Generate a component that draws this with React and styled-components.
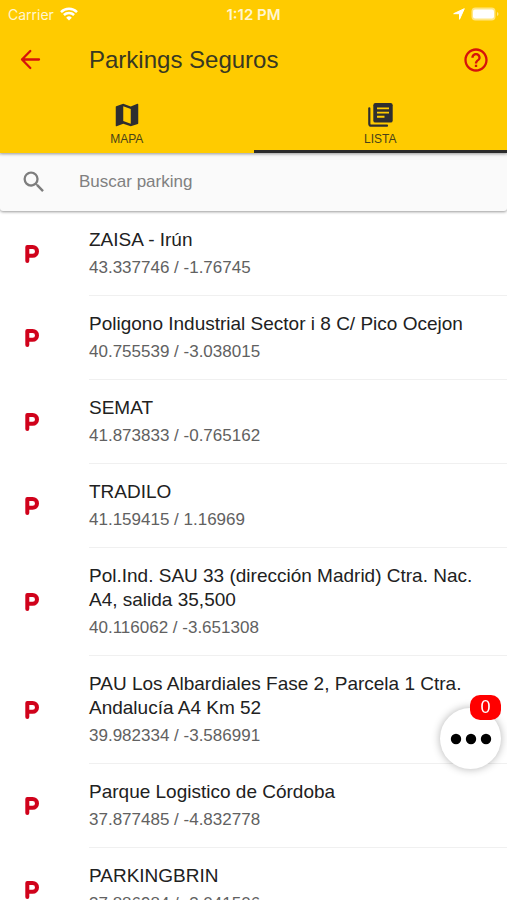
import React from "react";
import styled, { createGlobalStyle } from "styled-components";
import { MdHelpOutline, MdMap, MdSearch } from "react-icons/md";

const Global = createGlobalStyle`
  * { box-sizing: border-box; }
  html, body, #root { height: 100%; }
  body {
    margin: 0;
    background: #fff;
    color: #212121;
    font-family: "Liberation Sans", Arial, Helvetica, sans-serif;
  }
  button, input { font: inherit; }
`;

const Screen = styled.div`
  height: 100%;
  display: flex;
  flex-direction: column;
  overflow: hidden;
`;

const Header = styled.header`
  flex: none;
  position: relative;
  z-index: 1;
  background: #ffcb00;
  box-shadow: 0 1px 3px rgba(0, 0, 0, 0.4);
`;

const StatusBar = styled.div`
  display: grid;
  grid-template-columns: 1fr auto 1fr;
  align-items: center;
  height: 28px;
  padding: 0 8px;
  color: #fff6d0;
  font-family: Inter, "Liberation Sans", sans-serif;
  font-size: 14px;
`;

const StatusGroup = styled.div`
  display: flex;
  align-items: center;
  gap: 6px;
  justify-content: ${(p) => (p.$end ? "flex-end" : "flex-start")};
`;

const Clock = styled.time`
  font-size: 15px;
  font-weight: 600;
`;

const Toolbar = styled.div`
  display: flex;
  align-items: center;
  height: 64px;
  padding: 0 17px;
`;

const IconButton = styled.button`
  display: flex;
  padding: 0;
  border: 0;
  background: none;
  color: #d6130b;
  font-size: 28px;
`;

const Title = styled.h1`
  flex: 1;
  margin: 0;
  padding-left: 44px;
  color: #383822;
  font-size: 24px;
  font-weight: 400;
  line-height: 28px;
`;

const Tabs = styled.div`
  display: flex;
`;

const Tab = styled.button`
  flex: 1;
  display: flex;
  flex-direction: column;
  align-items: center;
  gap: 2px;
  height: 61px;
  padding: 8px 0 0;
  border: 0;
  border-bottom: 3px solid ${(p) => (p["aria-selected"] ? "#2b2b2b" : "transparent")};
  background: none;
  color: #4a4318;
  font-size: 12px;
  line-height: 14px;

  svg {
    color: #2e2e30;
    font-size: 30px;
  }
`;

const SearchBar = styled.label`
  flex: none;
  display: flex;
  align-items: center;
  height: 58px;
  padding: 0 20px;
  gap: 31px;
  border-radius: 3px;
  background: #fafafa;
  box-shadow: 0 1px 3px rgba(0, 0, 0, 0.4);
  color: #7d7d7d;
  font-size: 28px;
`;

const SearchInput = styled.input`
  flex: 1;
  min-width: 0;
  padding: 0;
  border: 0;
  outline: 0;
  background: none;
  color: #212121;
  font-size: 17px;

  &::placeholder {
    color: #808080;
    opacity: 1;
  }
`;

const List = styled.ul`
  flex: 1;
  min-height: 0;
  margin: 0;
  padding: 1px 0 0;
  overflow: hidden;
  list-style: none;
`;

const Row = styled.li`
  display: flex;
  align-items: center;
  padding-left: 25px;
  gap: 50px;
`;

const MarkIcon = styled.svg`
  flex: none;
  color: #d0021b;
`;

const RowBody = styled.div`
  flex: 1;
  min-width: 0;
  padding: 16px 20px 16px 0;
  border-bottom: 1px solid #f0f0f0;
`;

const Name = styled.h2`
  margin: 0;
  font-size: 19px;
  font-weight: 400;
  line-height: 24px;
`;

const Coordinates = styled.p`
  margin: 4px 0 0;
  color: #616161;
  font-size: 17px;
  line-height: 23px;
`;

const MoreButton = styled.button`
  position: fixed;
  right: 6px;
  bottom: 131px;
  z-index: 2;
  display: flex;
  align-items: center;
  justify-content: center;
  width: 61px;
  height: 61px;
  padding: 0;
  border: 0;
  border-radius: 50%;
  background: #fff;
  box-shadow: 0 0 8px rgba(0, 0, 0, 0.3);
`;

const Badge = styled.span`
  position: absolute;
  top: -13px;
  right: 0;
  width: 31px;
  border-radius: 10px;
  background: #ff0000;
  color: #fff;
  font-size: 18px;
  line-height: 25px;
  text-align: center;
`;

const parkings = [
  ["ZAISA - Irún", "43.337746 / -1.76745"],
  ["Poligono Industrial Sector i 8 C/ Pico Ocejon", "40.755539 / -3.038015"],
  ["SEMAT", "41.873833 / -0.765162"],
  ["TRADILO", "41.159415 / 1.16969"],
  ["Pol.Ind. SAU 33 (dirección Madrid) Ctra. Nac. A4, salida 35,500", "40.116062 / -3.651308"],
  ["PAU Los Albardiales Fase 2, Parcela 1 Ctra. Andalucía A4 Km 52", "39.982334 / -3.586991"],
  ["Parque Logistico de Córdoba", "37.877485 / -4.832778"],
  ["PARKINGBRIN", "37.886984 / -3.041506"],
];

const Wifi = () => (
  <svg width="18" height="14" viewBox="0 0 18 14" fill="none" stroke="#fff" strokeWidth="2.5" aria-hidden="true">
    <path d="M1 5.1a11.4 11.4 0 0 1 16 0M3.9 8a7.3 7.3 0 0 1 10.2 0" />
    <path d="M9 13.6 6.2 10.7a4 4 0 0 1 5.6 0Z" fill="#fff" stroke="none" />
  </svg>
);

const LocationArrow = () => (
  <svg width="12" height="12" viewBox="0 0 12 12" fill="#fff" stroke="#fff" strokeLinejoin="round" aria-hidden="true">
    <path d="M11.3.7 6.5 11.3V5.7H.7Z" />
  </svg>
);

const Battery = () => (
  <svg width="28" height="14" viewBox="0 0 28 14" aria-hidden="true">
    <rect x=".5" y=".5" width="24" height="13" rx="4" fill="#ffe683" />
    <rect x="2" y="2.5" width="21" height="9" rx="2" fill="#fff" />
    <path d="M26 5v4q1.5-.5 1.5-2T26 5Z" fill="#ffe683" />
  </svg>
);

const BackArrow = () => (
  <svg width="28" height="28" viewBox="0 0 28 28" fill="none" stroke="currentColor" strokeWidth="2.3" strokeLinecap="round" strokeLinejoin="round" aria-hidden="true">
    <path d="M22 13.5H5M13.3 5 5 13.5l8.3 8.5" />
  </svg>
);

const Books = () => (
  <svg width="30" height="30" viewBox="0 0 30 30" fill="none" aria-hidden="true">
    <path d="M4.3 8.3v15.4q0 2 2 2H22" stroke="currentColor" strokeWidth="2.2" strokeLinecap="round" />
    <rect x="8.3" y="3" width="19.4" height="19.6" rx="2.2" fill="currentColor" />
    <path d="M12 8.4h12M12 12.6h12M12 16.8h7.5" stroke="#ffcb00" strokeWidth="1.9" />
  </svg>
);

const ParkingMark = () => (
  <MarkIcon width="14" height="20" viewBox="0 0 14 20" fill="none" stroke="currentColor" strokeWidth="4" strokeLinejoin="round" strokeLinecap="round" aria-hidden="true">
    <path d="M2.3 17V3h5.3a4.2 4.2 0 0 1 0 8.8H2.3" />
  </MarkIcon>
);

const Dots = () => (
  <svg width="42" height="12" viewBox="0 0 42 12" aria-hidden="true">
    <circle cx="6" cy="6" r="5.2" />
    <circle cx="21" cy="6" r="5.2" />
    <circle cx="36" cy="6" r="5.2" />
  </svg>
);

export default function App() {
  return (
    <Screen>
      <Global />
      <Header>
        <StatusBar>
          <StatusGroup>
            <span>Carrier</span>
            <Wifi />
          </StatusGroup>
          <Clock>1:12 PM</Clock>
          <StatusGroup $end>
            <LocationArrow />
            <Battery />
          </StatusGroup>
        </StatusBar>
        <Toolbar>
          <IconButton aria-label="Volver"><BackArrow /></IconButton>
          <Title>Parkings Seguros</Title>
          <IconButton aria-label="Ayuda"><MdHelpOutline /></IconButton>
        </Toolbar>
        <Tabs role="tablist">
          <Tab role="tab" aria-selected={false}><MdMap />MAPA</Tab>
          <Tab role="tab" aria-selected={true}><Books />LISTA</Tab>
        </Tabs>
      </Header>
      <SearchBar>
        <MdSearch />
        <SearchInput type="search" placeholder="Buscar parking" aria-label="Buscar parking" />
      </SearchBar>
      <List>
        {parkings.map(([name, coordinates]) => (
          <Row key={name}>
            <ParkingMark />
            <RowBody>
              <Name>{name}</Name>
              <Coordinates>{coordinates}</Coordinates>
            </RowBody>
          </Row>
        ))}
      </List>
      <MoreButton aria-label="Más opciones">
        <Dots />
        <Badge>0</Badge>
      </MoreButton>
    </Screen>
  );
}
